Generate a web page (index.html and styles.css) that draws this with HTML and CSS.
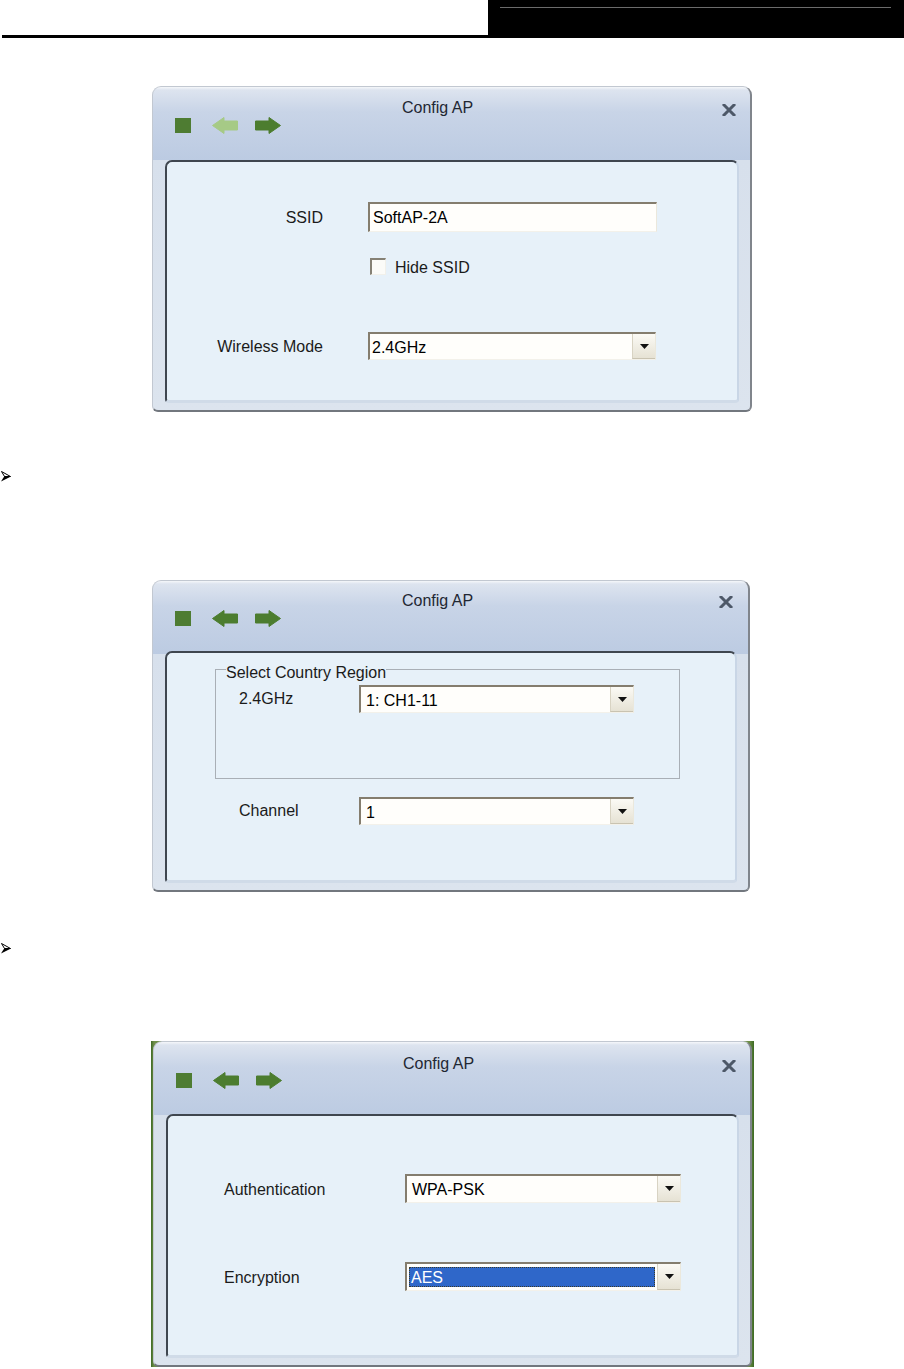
FILE: index.html
```html
<!DOCTYPE html>
<html lang="en">
<head>
<meta charset="utf-8">
<title>Config AP</title>
<link rel="stylesheet" href="styles.css">
</head>
<body>
<div class="page-head">
  <div class="page-head-left"></div>
  <div class="page-head-right"><div class="page-head-rule"></div></div>
</div>

<div class="dialog d1">
  <div class="titlebar">
    <div class="tools">
      <span class="tool-square"></span>
      <svg class="tool-arrow" width="26" height="17" viewBox="0 0 26 17"><polygon points="0.5,8.5 12,0.5 12,4 25.5,4 25.5,13 12,13 12,16.5" fill="#a6ca86" stroke="#a6ca86" stroke-width="1" stroke-linejoin="round"/></svg>
      <svg class="tool-arrow" width="26" height="17" viewBox="0 0 26 17"><polygon points="25.5,8.5 14,0.5 14,4 0.5,4 0.5,13 14,13 14,16.5" fill="#4c7d2f" stroke="#4c7d2f" stroke-width="1" stroke-linejoin="round"/></svg>
    </div>
    <div class="title">Config AP</div>
    <svg class="close" width="14" height="12" viewBox="0 0 14 12"><path d="M2 1 L12 11 M12 1 L2 11" stroke="#4d5868" stroke-width="3" stroke-linecap="square"/></svg>
  </div>
  <div class="panel">
    <div class="form f1">
      <div class="row">
        <span class="lbl">SSID</span>
        <div class="input">SoftAP-2A</div>
      </div>
      <div class="row row-check">
        <span class="check"></span>
        <span class="check-text">Hide SSID</span>
      </div>
      <div class="row row-mode">
        <span class="lbl">Wireless Mode</span>
        <div class="select"><span class="val">2.4GHz</span><span class="btn"><svg width="9" height="5" viewBox="0 0 9 5"><polygon points="0,0 9,0 4.5,5" fill="#111"/></svg></span></div>
      </div>
    </div>
  </div>
</div>

<div class="bullet"><svg width="10" height="11" viewBox="0 0 10 11"><polygon points="0.5,0.5 9.5,5.5 3.5,5.5" fill="#fff" stroke="#000" stroke-width="1" stroke-linejoin="round"/><polygon points="0,10.5 10,5.5 3.5,5" fill="#000"/></svg></div>

<div class="dialog d2">
  <div class="titlebar">
    <div class="tools">
      <span class="tool-square"></span>
      <svg class="tool-arrow" width="26" height="17" viewBox="0 0 26 17"><polygon points="0.5,8.5 12,0.5 12,4 25.5,4 25.5,13 12,13 12,16.5" fill="#4c7d2f" stroke="#4c7d2f" stroke-width="1" stroke-linejoin="round"/></svg>
      <svg class="tool-arrow" width="26" height="17" viewBox="0 0 26 17"><polygon points="25.5,8.5 14,0.5 14,4 0.5,4 0.5,13 14,13 14,16.5" fill="#4c7d2f" stroke="#4c7d2f" stroke-width="1" stroke-linejoin="round"/></svg>
    </div>
    <div class="title">Config AP</div>
    <svg class="close" width="14" height="12" viewBox="0 0 14 12"><path d="M2 1 L12 11 M12 1 L2 11" stroke="#4d5868" stroke-width="3" stroke-linecap="square"/></svg>
  </div>
  <div class="panel">
    <fieldset class="group">
      <legend>Select Country Region</legend>
      <div class="row row-region">
        <span class="lbl">2.4GHz</span>
        <div class="select"><span class="val">1: CH1-11</span><span class="btn"><svg width="9" height="5" viewBox="0 0 9 5"><polygon points="0,0 9,0 4.5,5" fill="#111"/></svg></span></div>
      </div>
    </fieldset>
    <div class="row row-channel">
      <span class="lbl">Channel</span>
      <div class="select"><span class="val">1</span><span class="btn"><svg width="9" height="5" viewBox="0 0 9 5"><polygon points="0,0 9,0 4.5,5" fill="#111"/></svg></span></div>
    </div>
  </div>
</div>

<div class="bullet bullet2"><svg width="10" height="11" viewBox="0 0 10 11"><polygon points="0.5,0.5 9.5,5.5 3.5,5.5" fill="#fff" stroke="#000" stroke-width="1" stroke-linejoin="round"/><polygon points="0,10.5 10,5.5 3.5,5" fill="#000"/></svg></div>

<div class="desk">
  <div class="dialog d3">
    <div class="titlebar">
      <div class="tools">
        <span class="tool-square"></span>
        <svg class="tool-arrow" width="26" height="17" viewBox="0 0 26 17"><polygon points="0.5,8.5 12,0.5 12,4 25.5,4 25.5,13 12,13 12,16.5" fill="#4c7d2f" stroke="#4c7d2f" stroke-width="1" stroke-linejoin="round"/></svg>
        <svg class="tool-arrow" width="26" height="17" viewBox="0 0 26 17"><polygon points="25.5,8.5 14,0.5 14,4 0.5,4 0.5,13 14,13 14,16.5" fill="#4c7d2f" stroke="#4c7d2f" stroke-width="1" stroke-linejoin="round"/></svg>
      </div>
      <div class="title">Config AP</div>
      <svg class="close" width="14" height="12" viewBox="0 0 14 12"><path d="M2 1 L12 11 M12 1 L2 11" stroke="#4d5868" stroke-width="3" stroke-linecap="square"/></svg>
    </div>
    <div class="panel">
      <div class="form f3">
        <div class="row">
          <span class="lbl">Authentication</span>
          <div class="select"><span class="val">WPA-PSK</span><span class="btn"><svg width="9" height="5" viewBox="0 0 9 5"><polygon points="0,0 9,0 4.5,5" fill="#111"/></svg></span></div>
        </div>
        <div class="row row-enc">
          <span class="lbl">Encryption</span>
          <div class="select"><span class="val selected">AES</span><span class="btn"><svg width="9" height="5" viewBox="0 0 9 5"><polygon points="0,0 9,0 4.5,5" fill="#111"/></svg></span></div>
        </div>
      </div>
    </div>
  </div>
</div>
</body>
</html>
```
FILE: styles.css
```css
* { box-sizing: border-box; }

body {
  margin: 0;
  width: 904px;
  background: #fff;
  font-family: "Liberation Sans", Arial, sans-serif;
  font-size: 16px;
  line-height: 20px;
  color: #1b1b1b;
}

/* page header */
.page-head { display: flex; height: 38px; }
.page-head-left { margin-left: 2px; width: 486px; border-bottom: 3px solid #000; }
.page-head-right { flex: 1; background: #000; padding: 7px 13px 0 12px; }
.page-head-rule { height: 1px; background: #6c6c6c; }

/* bullets */
.bullet { margin: 56px 0 0 1px; height: 16px; display: flex; align-items: center; }
.bullet2 { margin-top: 48px; }

/* dialog frame */
.dialog {
  width: 600px;
  height: 326px;
  margin: 48px 0 0 152px;
  display: flex;
  flex-direction: column;
  padding: 0 11px 7px 12px;
  border: 1px solid #c2c8d1;
  border-right: 2px solid #80858c;
  border-bottom: 2px solid #72777e;
  border-radius: 9px 9px 6px 6px;
  background: linear-gradient(#f5f7fa 0, #dde4ef 3px, #c8d4e7 25px, #bccbe2 73px, #d7e0ec 73px, #dce4ee 100%);
}
.d2 { margin-top: 96px; width: 598px; height: 312px; }
.desk {
  margin: 85px 0 0 151px;
  width: 603px;
  padding: 0 2px 0 2px;
  background: linear-gradient(90deg, #3f6a26, #6f8f4a 3px, #6f8f4a 598px, #3d6a24);
}
.d3 { margin: 0; width: 599px; }

.titlebar { flex: none; height: 73px; display: flex; align-items: flex-start; }
.d2 .titlebar { height: 70px; }
.d3 .titlebar { height: 72px; }

.tools { display: flex; align-items: center; height: 17px; margin: 30px 0 0 10px; }
.d2 .tools { margin-top: 29px; }
.d3 .tools { margin-top: 30px; }
.tool-square { width: 16px; height: 15px; background: #4e7c32; }
.tool-arrow { display: block; }
.tool-arrow:nth-child(2) { margin-left: 21px; }
.tool-arrow:nth-child(3) { margin-left: 17px; }

.title { margin: 11px 0 0 121px; color: #1f2733; }
.d2 .title { margin-top: 10px; }
.d3 .title { margin-top: 12px; }

.close { display: block; margin: 17px 3px 0 auto; }
.d2 .close { margin-top: 15px; margin-right: 4px; }
.d3 .close { margin-top: 18px; }

/* inner panel */
.panel {
  flex: 1;
  background: #e7f1f9;
  border-style: solid;
  border-width: 2px 2px 3px 2px;
  border-color: #3f464f #c9d6e6 #d0dbe8 #3f464f;
  border-radius: 7px 7px 4px 4px;
}

.row { display: flex; align-items: center; }
.lbl { flex: none; padding-top: 2px; }

/* dialog 1 */
.f1 { padding-top: 40px; }
.f1 .lbl { width: 156px; text-align: right; margin-right: 45px; }
.input {
  width: 289px;
  height: 30px;
  padding: 4px 0 0 3px;
  background: #fffefb;
  border-style: solid;
  border-width: 2px 1px 1px 2px;
  border-color: #847d6e #ebe8dc #f3f1ea #847d6e;
  color: #000;
}
.row-check { margin-top: 26px; padding-left: 203px; height: 17px; }
.check {
  width: 16px;
  height: 17px;
  margin-right: 9px;
  background: #fbfbf8;
  border-style: solid;
  border-width: 2px 1px 1px 2px;
  border-color: #858175 #f1f0ea #f1f0ea #858175;
}
.check-text { padding-top: 3px; }
.row-mode { margin-top: 57px; }

/* select */
.select {
  display: flex;
  width: 288px;
  height: 28px;
  background: #fffefb;
  border-style: solid;
  border-width: 2px 1px 1px 2px;
  border-color: #847d6e #ebe8dc #f3f1ea #847d6e;
  color: #000;
}
.val { flex: 1; display: flex; align-items: center; padding: 2px 0 0 2px; }
.btn {
  width: 23px;
  display: flex;
  align-items: center;
  justify-content: center;
  background: linear-gradient(#fbfaf5, #e6e2d4);
  border-left: 1px solid #d8d3c3;
  border-bottom: 1px solid #c9c3b1;
}
.btn svg { display: block; }

/* dialog 2 */
.group {
  margin: 2px 0 0 48px;
  width: 465px;
  padding: 0 0 65px 0;
  border: 1px solid #a9afb6;
  min-inline-size: 0;
}
.group legend { margin-left: 10px; padding: 8px 0 0 0; line-height: 20px; }
.row-region { margin-top: 2px; padding-left: 23px; }
.row-region .lbl, .row-channel .lbl { width: 120px; padding-top: 0; }
.row-region .select, .row-channel .select { width: 275px; }
.row-region .val, .row-channel .val { padding-left: 5px; }
.row-channel { margin-top: 18px; padding-left: 72px; }
.row-channel .select { height: 28px; }

/* dialog 3 */
.f3 { padding-top: 58px; padding-left: 56px; }
.f3 .lbl { width: 181px; }
.f3 .select { width: 276px; height: 29px; }
.f3 .val { padding-left: 5px; }
.row-enc { margin-top: 59px; }
.val.selected {
  margin: 3px 2px 3px 2px;
  padding: 1px 0 0 1px;
  background: #2f67c9;
  color: #fff;
  border: 1px dotted #3a3a2a;
}
```
